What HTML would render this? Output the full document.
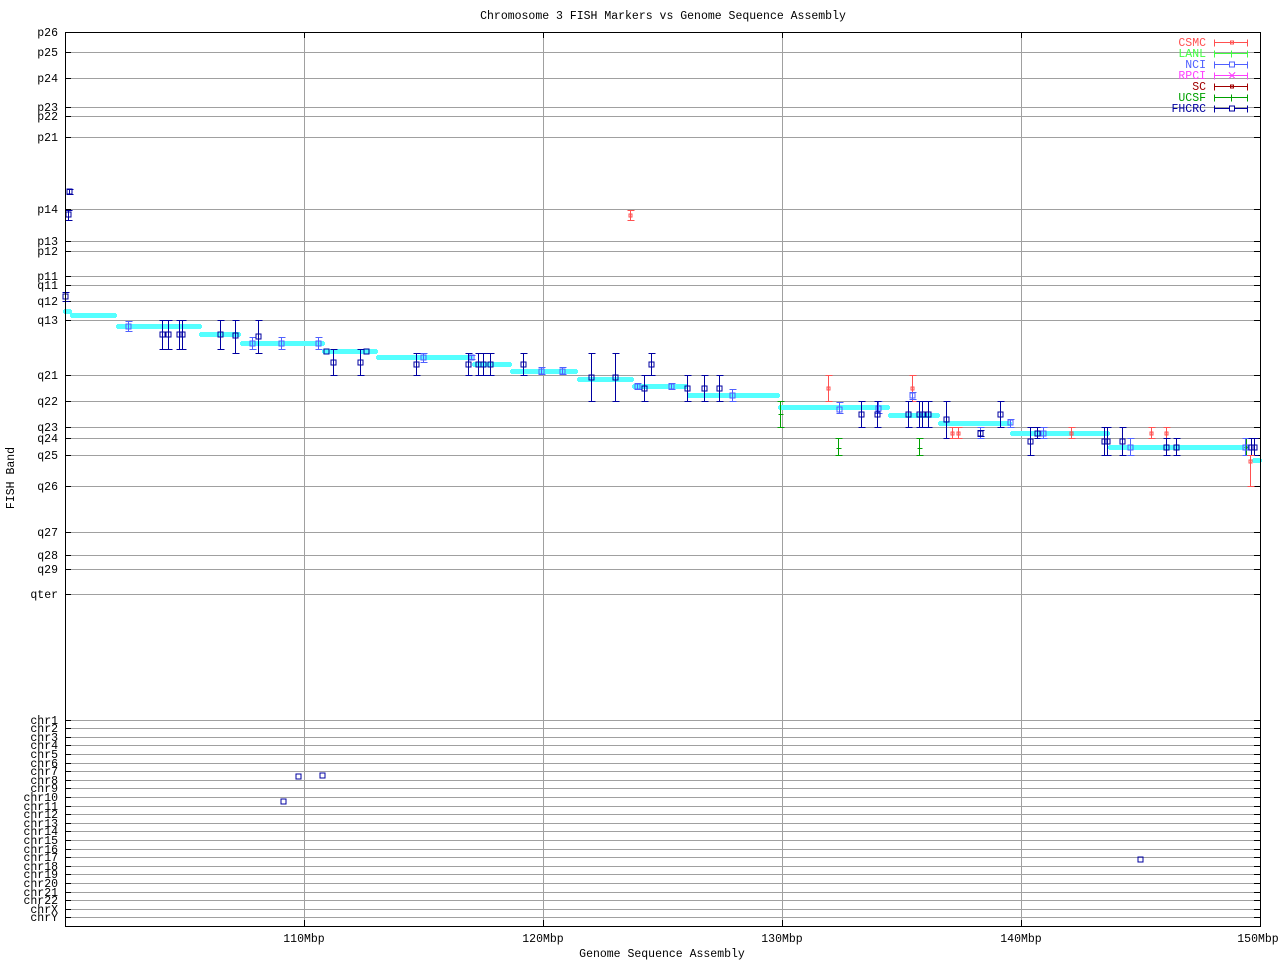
<!DOCTYPE html>
<html><head><meta charset="utf-8"><style>
html,body{margin:0;padding:0;background:#fff;width:1280px;height:960px;overflow:hidden}
svg text{font-family:"Liberation Mono",monospace;font-size:11.5px}
</style></head><body>
<svg id="s" width="1280" height="960" xmlns="http://www.w3.org/2000/svg" shape-rendering="crispEdges">
<rect width="1280" height="960" fill="#fff"/>
<g id="grid" stroke="#a0a0a0" stroke-width="1"></g>
<g id="ticks" stroke="#000" stroke-width="1"></g>
<g id="cyan" fill="#55ffff"></g>
<g id="marks" stroke-width="1" fill="none"></g>
<rect x="65.5" y="32.5" width="1195" height="894" fill="none" stroke="#000"/>
<text x="663" y="19" text-anchor="middle">Chromosome 3 FISH Markers vs Genome Sequence Assembly</text>
<text x="662" y="957" text-anchor="middle">Genome Sequence Assembly</text>
<text transform="translate(14,478) rotate(-90)" text-anchor="middle">FISH Band</text>
<g text-anchor="middle">
<text x="304" y="942">110Mbp</text><text x="543" y="942">120Mbp</text><text x="782" y="942">130Mbp</text><text x="1021" y="942">140Mbp</text><text x="1258" y="942">150Mbp</text>
</g>
<g id="ylab" text-anchor="end">
<text x="58" y="36">p26</text><text x="58" y="56">p25</text><text x="58" y="82">p24</text><text x="58" y="111">p23</text><text x="58" y="120">p22</text><text x="58" y="141">p21</text><text x="58" y="213">p14</text><text x="58" y="245">p13</text><text x="58" y="255">p12</text><text x="58" y="280">p11</text><text x="58" y="289">q11</text><text x="58" y="305">q12</text><text x="58" y="324">q13</text><text x="58" y="379">q21</text><text x="58" y="405">q22</text><text x="58" y="431">q23</text><text x="58" y="442">q24</text><text x="58" y="459">q25</text><text x="58" y="490">q26</text><text x="58" y="536">q27</text><text x="58" y="559">q28</text><text x="58" y="573">q29</text><text x="58" y="598">qter</text>
<text x="58" y="724">chr1</text><text x="58" y="732">chr2</text><text x="58" y="741">chr3</text><text x="58" y="749">chr4</text><text x="58" y="758">chr5</text><text x="58" y="767">chr6</text><text x="58" y="775">chr7</text><text x="58" y="784">chr8</text><text x="58" y="792">chr9</text><text x="58" y="801">chr10</text><text x="58" y="810">chr11</text><text x="58" y="818">chr12</text><text x="58" y="827">chr13</text><text x="58" y="835">chr14</text><text x="58" y="844">chr15</text><text x="58" y="853">chr16</text><text x="58" y="861">chr17</text><text x="58" y="870">chr18</text><text x="58" y="878">chr19</text><text x="58" y="887">chr20</text><text x="58" y="896">chr21</text><text x="58" y="904">chr22</text><text x="58" y="913">chrX</text><text x="58" y="921">chrY</text>
</g>
<g text-anchor="end">
<text x="1206" y="46" fill="#ff5050">CSMC</text>
<text x="1206" y="57" fill="#40ff40">LANL</text>
<text x="1206" y="68" fill="#5060ff">NCI</text>
<text x="1206" y="79" fill="#ff40ff">RPCI</text>
<text x="1206" y="90" fill="#a00000">SC</text>
<text x="1206" y="101" fill="#00a000">UCSF</text>
<text x="1206" y="112" fill="#0000a0">FHCRC</text>
</g>
<g id="leg" fill="none"></g>
</svg>
<script>
var NS="http://www.w3.org/2000/svg";
function el(p,t,a){var e=document.createElementNS(NS,t);for(var k in a)e.setAttribute(k,a[k]);document.getElementById(p).appendChild(e);return e;}
var ys=[32,52,78,107,116,137,209,241,251,276,285,301,320,375,401,427,438,455,486,532,555,569,594,720,728,737,745,754,763,771,780,788,797,806,814,823,831,840,849,857,866,874,883,892,900,909,917];
ys.forEach(function(y){if(y>32){el("grid","line",{x1:65,x2:1260,y1:y+.5,y2:y+.5});}el("ticks","line",{x1:65,x2:71,y1:y+.5,y2:y+.5});el("ticks","line",{x1:1254,x2:1260,y1:y+.5,y2:y+.5});});
[304,543,782,1021].forEach(function(x){el("grid","line",{x1:x+.5,x2:x+.5,y1:32,y2:926});el("ticks","line",{x1:x+.5,x2:x+.5,y1:32,y2:38});el("ticks","line",{x1:x+.5,x2:x+.5,y1:920,y2:926});});
var cy=[[63,72,311],[70,117,315],[116,202,326],[199,241,334],[240,325,343],[322,378,351],[376,473,357],[472,512,364],[510,578,371],[577,634,379],[632,688,386],[687,780,395],[778,890,407],[888,940,415],[938,1012,423],[1010,1110,433],[1108,1248,447],[1252,1262,460]];
cy.forEach(function(c){el("cyan","rect",{x:c[0]+1,y:c[2]-2,width:c[1]-c[0]-2,height:5});el("cyan","rect",{x:c[0],y:c[2]-1,width:c[1]-c[0],height:3});});
var C={F:"#0000a0",N:"#5060ff",C:"#ff5050",U:"#00a000",L:"#40ff40"};
var m=[
["F",69,191,189,194],["F",68,214,210,220],["F",65,296,292,301],
["N",128,326,321,331],["F",162,334,320,349],["F",168,334,320,349],["F",179,334,320,349],["F",182,334,320,349],
["F",220,334,320,349],["F",235,335,320,353],["N",252,343,337,349],["F",258,336,320,353],["N",281,343,337,349],["N",318,343,337,349],
["F",326,351,351,351],["F",333,362,349,375],["F",360,362,349,375],["F",366,351,351,351],["F",416,364,353,375],["N",423,357,353,362],
["N",471,357,355,359],["F",468,364,353,375],["F",478,364,353,375],["F",483,364,353,375],["F",490,364,353,375],["F",523,364,353,375],
["N",541,371,367,374],["N",562,371,367,374],["F",591,377,353,401],["F",615,377,353,401],["N",637,386,383,389],["F",644,388,375,401],
["F",651,364,353,375],["N",671,386,383,389],["F",687,388,375,401],["F",704,388,375,401],["F",719,388,375,401],["N",732,395,389,401],
["U",780,414,401,427],["C",828,388,375,401],["N",839,409,402,413],["U",838,448,438,455],["F",861,414,401,427],["N",878,408,401,413],["F",877,414,401,427],
["C",912,388,375,401],["N",912,395,392,399],["F",908,414,401,427],["F",919,414,401,427],["F",922,414,401,427],["F",928,414,401,427],["U",919,448,438,455],
["F",946,419,401,438],["C",952,433,427,438],["C",958,433,427,438],["N",980,433,427,438],["F",980,433,430,436],["F",1000,414,401,427],["N",1010,422,419,427],
["F",1030,441,427,455],["F",1037,433,427,438],["N",1043,433,427,438],["C",1071,433,427,438],["F",1104,441,427,455],["F",1107,441,427,455],
["F",1122,441,427,455],["N",1130,447,438,455],["C",1151,433,427,438],["C",1166,433,427,438],["F",1166,447,438,455],["F",1176,447,438,455],
["U",1246,447,438,455],["N",1245,447,438,455],["F",1251,447,438,455],["F",1254,447,438,455],["C",1250,461,455,486],["C",630,215,210,220],
["F",298,776,776,776],["F",322,775,775,775],["F",283,801,801,801],["F",1140,859,859,859]];
m.forEach(function(d){var c=C[d[0]],x=d[1]+.5;
 if(d[4]>d[3]){el("marks","line",{x1:x,x2:x,y1:d[3],y2:d[4]+1,stroke:c});el("marks","line",{x1:x-3,x2:x+4,y1:d[3]+.5,y2:d[3]+.5,stroke:c});el("marks","line",{x1:x-3,x2:x+4,y1:d[4]+.5,y2:d[4]+.5,stroke:c});}
 if(d[0]=="F"||d[0]=="N")el("marks","rect",{x:x-2.5,y:d[2]-2,width:5,height:5,stroke:c,fill:"none"});
 else if(d[0]=="C")el("marks","rect",{x:x-1.5,y:d[2]-1,width:3,height:3,stroke:c,fill:"none"});
 else el("marks","line",{x1:x-2,x2:x+3,y1:d[2]+.5,y2:d[2]+.5,stroke:c});
});
var L=[["#ff5050","d"],["#40ff40","p"],["#5060ff","s"],["#ff40ff","x"],["#a00000","d"],["#00a000","p"],["#0000a0","s"]];
L.forEach(function(l,i){var y=42.5+i*11;el("leg","line",{x1:1214,x2:1248,y1:y,y2:y,stroke:l[0]});el("leg","line",{x1:1214.5,x2:1214.5,y1:y-3,y2:y+4,stroke:l[0]});el("leg","line",{x1:1247.5,x2:1247.5,y1:y-3,y2:y+4,stroke:l[0]});
 if(l[1]=="s")el("leg","rect",{x:1229.5,y:y-2.5,width:5,height:5,stroke:l[0],fill:"#fff"});
 else if(l[1]=="d")el("leg","rect",{x:1230.5,y:y-1.5,width:3,height:3,stroke:l[0]});
 else if(l[1]=="x"){el("leg","line",{x1:1229,x2:1235,y1:y-3,y2:y+3,stroke:l[0]});el("leg","line",{x1:1229,x2:1235,y1:y+3,y2:y-3,stroke:l[0]});}
 else el("leg","line",{x1:1231.5,x2:1231.5,y1:y-3,y2:y+4,stroke:l[0]});
});
</script>
</body></html>
